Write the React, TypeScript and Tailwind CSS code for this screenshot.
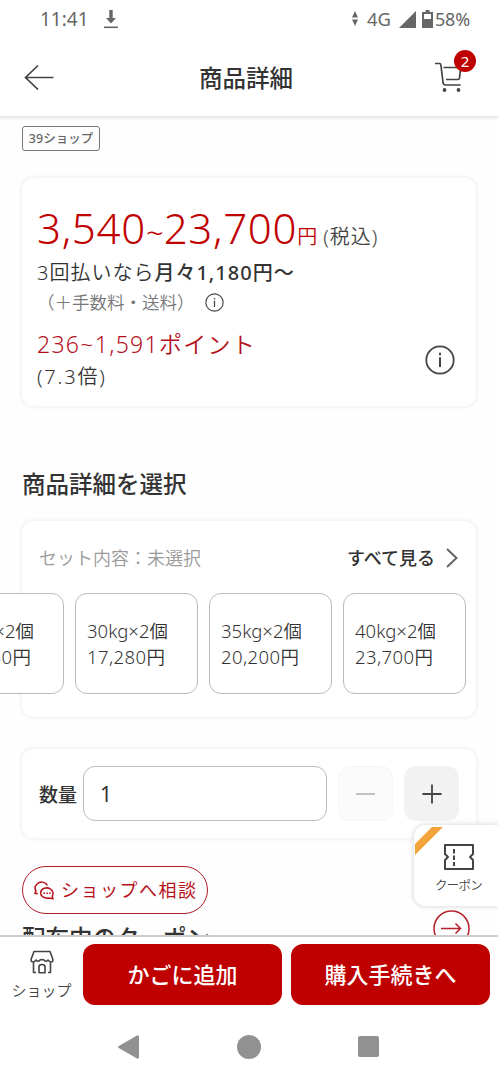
import { ReactNode } from 'react'
import clsx from 'clsx'

interface Option {
  name: string
  price: string
}

const options: Option[] = [
  { name: '25kg×2個', price: '14,350円' },
  { name: '30kg×2個', price: '17,280円' },
  { name: '35kg×2個', price: '20,200円' },
  { name: '40kg×2個', price: '23,700円' },
]

function InfoIcon({ className }: { className?: string }) {
  return (
    <svg viewBox="0 0 30 30" fill="none" stroke="currentColor" className={className}>
      <circle cx="15" cy="15" r="13.7" strokeWidth="1.8" />
      <path d="M15 12.3v9.7M15 7.8v2.4" strokeWidth="2" />
    </svg>
  )
}

function Card({ className, children }: { className?: string; children: ReactNode }) {
  return (
    <section className={clsx('mx-[22px] rounded-xl bg-white shadow-[0_0_3px_2px_#f3f3f3]', className)}>
      {children}
    </section>
  )
}

function StatusBar() {
  return (
    <div className="relative z-20 flex h-[38px] shrink-0 items-center bg-white text-[#666]">
      <span className="ml-[40px] w-[64px] text-[19px] leading-none">11:41</span>
      <svg viewBox="0 0 14 20" className="h-5 w-3.5 shrink-0">
        <path d="M5.3 1h3.4v8H12l-5 5.500L2 9h3.300z" fill="currentColor" />
        <path d="M0 18.300h14" stroke="currentColor" strokeWidth="1.600" />
      </svg>
      <svg viewBox="0 0 8 16" className="ml-[233px] h-4 w-2 shrink-0" fill="currentColor">
        <path d="M4 0l3 6.500H1zM4 15l3-6.500H1z" />
      </svg>
      <span className="ml-2 w-[32px] text-[18.500px] leading-none">4G</span>
      <svg viewBox="0 0 17 17" className="h-[17px] w-[17px] shrink-0">
        <path d="M17 0v17H0z" fill="currentColor" />
      </svg>
      <svg viewBox="0 0 11 18" className="ml-[6px] h-[18px] w-[11px] shrink-0">
        <path d="M3.500 0h4v2H11v16H0V2h3.500z" fill="currentColor" />
        <path d="M2 4h7v5H2z" fill="white" />
      </svg>
      <span className="ml-0.5 text-[18px] leading-none tracking-[-0.2px]">58%</span>
    </div>
  )
}

function Header() {
  return (
    <header className="relative z-10 flex h-[78px] shrink-0 items-center justify-between bg-white pr-[34px] pl-[24px] shadow-[0_1px_3px_1px_#e2e2e2]">
      <svg viewBox="0 0 30 26" className="h-[26px] w-[30px]" fill="none" stroke="#444" strokeWidth="1.700">
        <path d="M29.500 13.500H1.500M14 1.500l-12.500 12 12.500 12" />
      </svg>
      <h1 className="mt-[3px] ml-[4px] text-[23.500px] font-medium">商品詳細</h1>
      <div className="relative">
        <svg viewBox="0 0 30 30" className="h-[30px] w-[30px]" fill="none" stroke="#444" strokeWidth="1.700">
          <path d="M1 1.500h4.500q1.200 0 1.400 1.500l2.200 18q.3 2 2 2h15.500" />
          <path d="M9.500 5.500h17.200l-1.200 10.300q-.2 1.700-2 1.700H12" />
          <circle cx="10.500" cy="28" r="1.900" fill="#444" stroke="none" />
          <circle cx="24.500" cy="28" r="1.900" fill="#444" stroke="none" />
        </svg>
        <span className="absolute -top-[12px] left-[20px] flex h-[22px] w-[22px] items-center justify-center rounded-full bg-[#bf0000] text-[15px] text-white">
          2
        </span>
      </div>
    </header>
  )
}

function PriceCard() {
  return (
    <Card className="mt-[27px] h-[228px] pt-[27px] pl-[15px]">
      <div className="flex h-[52px] items-end pb-[9px] leading-none whitespace-nowrap text-[#bf0000]">
        <p className="flex h-[40px] items-baseline">
          <span className="text-[42px] leading-[40px] font-light tracking-[0.7px]">3,540</span>
          <span className="text-[31px] leading-[20px] font-light">~</span>
          <span className="text-[42px] leading-[40px] font-light tracking-[0.7px]">23,700</span>
          <span className="text-[20px] leading-[20px] font-[350]">円</span>
          <span className="ml-[6px] text-[20px] leading-[20px] font-[350] tracking-[1px] text-[#444]">(税込)</span>
        </p>
      </div>
      <p className="mt-0.5 text-[20px] leading-7 font-[350] tracking-[1px]">
        3回払いなら<span className="font-medium">月々1,180円〜</span>
      </p>
      <p className="mt-px flex h-7 items-center text-[17.500px] font-[350] text-[#777]">
        （＋手数料・送料）
        <InfoIcon className="ml-2.5 h-[19px] w-[19px] text-[#444]" />
      </p>
      <div className="mt-[12px] flex justify-between pr-[21px]">
        <div>
          <p className="text-[23px] leading-8 font-[350] tracking-[1.300px] text-[#b40f1b]">236~1,591ポイント</p>
          <p className="mt-px text-[20px] leading-8 font-[350] tracking-[1.800px]">(7.3倍)</p>
        </div>
        <InfoIcon className="mt-[17px] h-[30px] w-[30px] text-[#444]" />
      </div>
    </Card>
  )
}

function OptionCard({ name, price }: Option) {
  return (
    <div className="h-[101px] w-[123px] shrink-0 rounded-xl border border-[#bbb] bg-white pt-[24px] pl-[11px] text-[18.500px] leading-[26px] font-[350] whitespace-nowrap text-[#333]">
      <p>{name}</p>
      <p className="tracking-[0.400px]">{price}</p>
    </div>
  )
}

function Quantity() {
  return (
    <Card className="mt-[32px] flex h-[89px] items-center pl-[17px]">
      <span className="mt-[4px] w-[44px] text-[19px] font-medium">数量</span>
      <div className="flex h-[55px] w-[244px] items-center rounded-xl border border-[#bbb] pt-[3px] pl-[16px] text-[21px]">1</div>
      <button className="ml-[11px] flex h-[55px] w-[55px] items-center justify-center rounded-xl border border-[#f5f5f5] bg-[#fbfbfb]">
        <span className="h-[2px] w-[19px] bg-[#c3c3c3]" />
      </button>
      <button className="ml-[11px] flex h-[55px] w-[55px] items-center justify-center rounded-xl bg-[#f2f2f2]">
        <svg viewBox="0 0 20 20" className="h-5 w-5" stroke="#444" strokeWidth="1.800">
          <path d="M10 .5v19M.5 10h19" />
        </svg>
      </button>
    </Card>
  )
}

function ChatIcon() {
  return (
    <svg viewBox="0 0 20 19" className="h-[19px] w-5 shrink-0" fill="none" stroke="currentColor" strokeWidth="1.500" strokeLinejoin="round">
      <path d="M13.300 4.500C11.500.5 6 0 3 3 .5 5.500.8 8.300 2 10L.8 12.500h3" />
      <path d="M18.200 15.300c1.500-2.500.8-6-2-7.500-3.500-2-9-.5-9.500 3.500-.5 4 3.800 6.500 7.800 5.800l4.500.7z" />
      <path d="M9.500 12.300h1.500M12.300 12.300h1.500M15.100 12.300h1.500" />
    </svg>
  )
}

function CouponWidget() {
  return (
    <div className="absolute top-[709px] right-0 flex h-[81px] w-[84px] flex-col items-center overflow-hidden rounded-l-xl bg-white pt-[19px] pl-[5px] shadow-[0_0_5px_1px_#ddd]">
      <svg viewBox="0 0 28 28" className="absolute top-[2px] left-[1px] h-7 w-7">
        <path d="M17 0h11L0 28V17z" fill="#f0a43a" />
      </svg>
      <svg viewBox="0 0 30 26" className="h-[26px] w-[30px]" fill="none" stroke="#444" strokeWidth="2">
        <path d="M1 1h28v9l-3 3 3 3v9H1v-9l3-3-3-3z" strokeLinejoin="round" />
        <path d="M10 5v17" strokeDasharray="4.500 2" />
      </svg>
      <span className="mt-[7px] text-[12.500px] leading-[18px] font-[350] tracking-[-0.800px] text-[#444]">クーポン</span>
    </div>
  )
}

function BottomBar() {
  return (
    <footer className="flex h-[80px] shrink-0 border-t-2 border-[#ccc] bg-white">
      <div className="flex w-[83px] flex-col items-center pt-[13px]">
        <svg viewBox="0 0 24 24" className="h-6 w-6" fill="none" stroke="#444" strokeWidth="1.600" strokeLinejoin="round">
          <path d="M4 1.500h16L22.800 9v2q-1.800 2-3.800 0l-1-1q-2 2.500-4 0l-2-.5-2 .5q-2 2.500-4 0l-1 1q-2 2-3.800 0V9z" />
          <path d="M3.500 12.500v10H6M20.500 12.500v10H18M9 22.800V17q0-2.500 3-2.500t3 2.500v5.800z" />
        </svg>
        <span className="mt-[6px] text-[15px] leading-[20px] font-[350] text-[#444]">ショップ</span>
      </div>
      <div className="flex gap-[9px] pt-[7px] text-[22px] font-medium text-white">
        <button className="h-[61px] w-[199px] rounded-xl bg-[#bf0000]">かごに追加</button>
        <button className="h-[61px] w-[199px] rounded-xl bg-[#bf0000]">購入手続きへ</button>
      </div>
    </footer>
  )
}

function SystemNav() {
  return (
    <nav className="flex h-[65px] shrink-0 items-center pb-[2px] pl-[118px] text-[#919191]">
      <svg viewBox="0 0 22 24" className="h-6 w-[22px]" fill="currentColor">
        <path d="M.8 11L19 .5q2-.8 2 1.500v20q0 2.300-2 1.500L.8 13q-1.600-1 0-2z" />
      </svg>
      <span className="ml-[97px] h-6 w-6 rounded-full bg-[#919191]" />
      <span className="ml-[97px] h-[21px] w-[21px] rounded-[2px] bg-[#919191]" />
    </nav>
  )
}

export default function App() {
  return (
    <div className="flex h-[1080px] w-[498px] flex-col overflow-hidden bg-white font-['Noto_Sans','Noto_Sans_CJK_JP',sans-serif] text-[#333]" lang="ja">
      <StatusBar />
      <Header />
      <main className="relative min-h-0 flex-1 overflow-hidden bg-[#fefefe]">
        <div className="mt-[10px] ml-[22px] flex h-[25px] w-[78px] items-center justify-center rounded-[3px] border border-[#777] pt-[2px] text-[12.500px] font-medium text-[#666]">
          39ショップ
        </div>
        <PriceCard />
        <h2 className="mt-[61px] ml-[22px] text-[23.500px] leading-[34px] font-medium">商品詳細を選択</h2>
        <Card className="mt-[20px] h-[196px] pt-[22px]">
          <div className="flex h-[30px] items-center pr-[18px] pl-[17px]">
            <span className="text-[18px] font-[350] text-[#999]">セット内容：未選択</span>
            <span className="ml-auto text-[18px] font-medium">すべて見る</span>
            <svg viewBox="0 0 12 20" className="ml-[11px] h-5 w-3" fill="none" stroke="#666" strokeWidth="2">
              <path d="M1 1l9.500 9L1 19" />
            </svg>
          </div>
          <div className="mt-[20px] -ml-[81px] flex gap-[11px]">
            {options.map((option) => (
              <OptionCard key={option.name} {...option} />
            ))}
          </div>
        </Card>
        <Quantity />
        <button className="mt-[28px] ml-[22px] flex h-[48px] w-[186px] items-center gap-[7px] rounded-full border-[1.500px] border-[#b01e28] pl-[11px] text-[18px] tracking-[1.500px] whitespace-nowrap text-[#b5121b]">
          <ChatIcon />
          ショップへ相談
        </button>
        <div className="-mt-[4px] flex justify-between pr-[28px] pl-[22px]">
          <h2 className="mt-[11px] text-[23.500px] leading-[34px] font-medium">配布中のクーポン</h2>
          <svg viewBox="0 0 37 37" className="h-[37px] w-[37px]" fill="none" stroke="#b5202a" strokeWidth="1.500">
            <circle cx="18.500" cy="18.500" r="17.500" />
            <path d="M8 18.500h19.500M22.500 13.500l5 5-5 5" />
          </svg>
        </div>
        <CouponWidget />
      </main>
      <BottomBar />
      <SystemNav />
    </div>
  )
}
